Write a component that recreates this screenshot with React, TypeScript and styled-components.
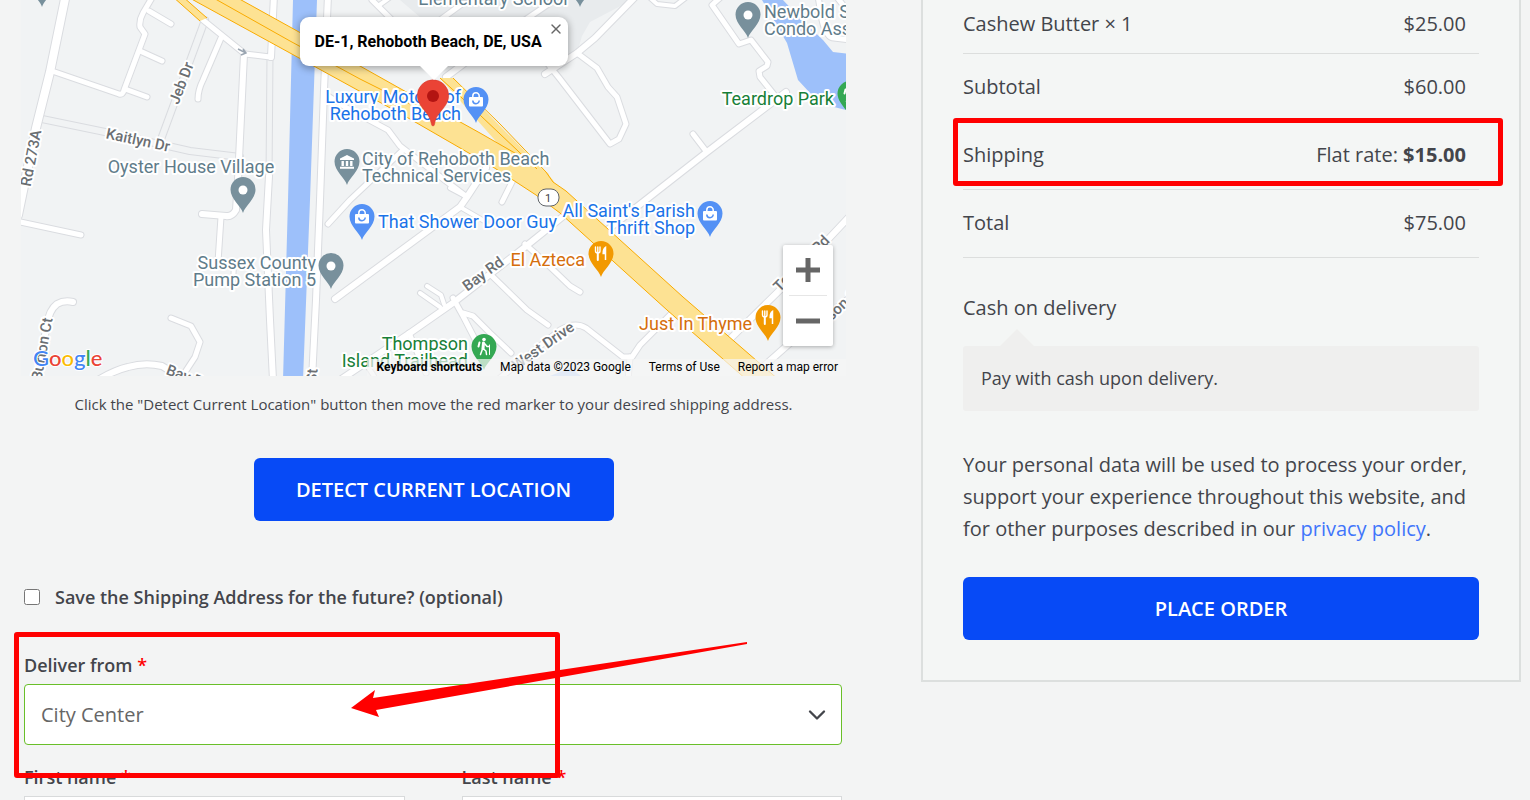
import React from "react";
import styled, { createGlobalStyle } from "styled-components";
import { ChevronDown, Minus, Plus, X } from "lucide-react";

const GlobalStyle = createGlobalStyle`
  *, *::before, *::after { box-sizing: border-box; }
  body {
    margin: 0;
    background: #f3f4f4;
    color: #43454b;
    font-family: "Open Sans", sans-serif;
    font-size: 20px;
    line-height: 32px;
  }
`;

const Page = styled.div`
  display: grid;
  grid-template-columns: minmax(0, 825fr) minmax(0, 600fr);
  column-gap: 75px;
  align-items: start;
  height: 100vh;
  overflow: hidden;
  padding: 0 9px 0 21px;
`;

/* ---------- map ---------- */

const MapFrame = styled.section`
  position: relative;
  height: 376px;
  overflow: hidden;
  background: #f1f3f4;
  font-family: Roboto, sans-serif;
`;

const MapCanvas = styled.svg`
  display: block;
  width: 100%;
  height: 100%;
`;

const Halo = styled.text`
  paint-order: stroke;
  stroke: #fff;
  stroke-width: 4px;
  stroke-linejoin: round;
  font-family: Roboto, sans-serif;
`;

const PlaceLabel = styled(Halo)`
  font-size: 18px;
`;

const RoadLabel = styled(Halo)`
  font-size: 15px;
  font-weight: 500;
  fill: #6b6f73;
`;

const LogoText = styled(Halo)`
  font-family: Lato, sans-serif;
  font-size: 22px;
  font-weight: 500;
  stroke-width: 2px;
`;

const InfoWindow = styled.div`
  position: absolute;
  left: 50%;
  top: 17px;
  transform: translateX(-50%);
  width: 268px;
  padding: 12px 15px;
  border-radius: 9px;
  background: #fff;
  box-shadow: 0 2px 7px 1px rgba(0, 0, 0, 0.3);
  color: #000;
  font-size: 16px;
  font-weight: 700;
  line-height: 25px;
  white-space: nowrap;

  &::after {
    content: "";
    position: absolute;
    left: 120px;
    top: 100%;
    border: 14px solid transparent;
    border-top-color: #fff;
    border-bottom: 0;
  }
`;

const CloseButton = styled.button`
  position: absolute;
  top: 4px;
  right: 4px;
  display: flex;
  padding: 0;
  border: 0;
  background: none;
  color: #666;
`;

const ZoomControl = styled.div`
  position: absolute;
  right: 13px;
  bottom: 30px;
  width: 50px;
  padding: 0 6px;
  border-radius: 2px;
  background: #fff;
  box-shadow: 0 1px 4px rgba(0, 0, 0, 0.3);
`;

const ZoomButton = styled.button`
  display: flex;
  align-items: center;
  justify-content: center;
  width: 100%;
  height: 50px;
  padding: 0;
  border: 0;
  background: none;
  color: #666;

  & + & {
    height: 51px;
    border-top: 1px solid #e6e6e6;
  }
`;

const ZoomGlyph = styled.svg`
  width: 24px;
  height: 24px;
  fill: currentColor;
`;

const MapFooter = styled.div`
  position: absolute;
  right: 0;
  bottom: 0;
  display: flex;
  color: #000;
  font-size: 12px;
  line-height: 17px;

  & > * {
    padding: 0 8px 0 10px;
    border: 0;
    background: rgba(245, 245, 245, 0.7);
    color: inherit;
    font: inherit;
    text-decoration: none;
    white-space: nowrap;
  }
`;

const ShortcutsButton = styled.button`
  && { font-weight: 700; }
`;

const CASING = "#dadce0";
const GROUND = "#f1f3f4";

type Road = [d: string, width: number];

const faintRoads: Road[] = [
  ["M42 119 L105 132 L168 146 L190 151 L240 157", 6],
  ["M205 20 L160 142", 6],
  ["M270 55 L269 178", 5],
];

const roads: Road[] = [
  ["M66 -6 L50 72 L36 128 L18 215", 8],
  ["M52 71 L119 94 Q123 95 124 90 L145 34 L140 27 Q139 20 143 13 L153 -4", 5],
  ["M149 11 L171 24", 5],
  ["M140 51 L162 61", 5],
  ["M125 89 L147 97", 5],
  ["M203 20 L245 54 L270 57", 5],
  ["M221 38 L203 80 Q198 90 198 99", 5],
  ["M244 54 L238 180 L236 210 Q232 217 226 216 L202 214", 6],
  ["M274 -5 L271 57", 6],
  ["M269 176 L266 230 L270 320 L273 380", 6],
  ["M221 217 L218 262", 5],
  ["M234 262 L233 286", 4],
  ["M16 221 L81 235", 5],
  ["M73 302 Q64 300 57 304 Q49 310 47 325 L36 380", 6],
  ["M171 318 L191 326 L200 342 L195 357 L180 380", 5],
  ["M98 380 Q115 370 128 367 Q145 362 162 366 L188 382", 6],
  ["M328 -5 L324 90 L320 200 L316 300 L312 380", 6],
  ["M372 0 L392 20", 5],
  ["M392 -4 L378 6", 4],
  ["M440 20 L466 1", 5],
  ["M525 20 L550 3", 5],
  ["M446 77 L482 50", 6],
  ["M638 -6 L595 38 L577 53 L545 74", 6],
  ["M577 53 L597 68 L608 87 L617 97 L626 124 L619 139 L610 144 L560 79 L540 54", 5],
  ["M648 -4 L657 4 L675 6 L688 -4", 4],
  ["M722 -4 L712 5 L739 44 L751 40 L768 62 L767 66 L759 71 L760 77 L776 97", 5],
  ["M818 -4 L822 20 Q826 38 834 38 L850 40", 5],
  ["M836 -4 L850 14", 5],
  ["M606 231 L707 152 L786 92", 6],
  ["M693 134 L706 151", 5],
  ["M328 96 L345 107 L388 130 L400 146 L430 169 L467 197", 5],
  ["M403 150 L350 200 L328 224", 5],
  ["M486 168 L467 197 L460 207 L335 299", 6],
  ["M450 188 L467 197", 4],
  ["M460 207 L486 222", 4],
  ["M514 178 L502 202", 5],
  ["M340 380 L410 333 L453 303 L525 247 L566 214", 6],
  ["M409 333 L426 373", 5],
  ["M453 298 L463 316 L478 345", 5],
  ["M463 313 L473 316 L490 333 L511 353", 5],
  ["M420 293 L440 307", 4],
  ["M427 286 L441 295 L444 304", 4],
  ["M490 274 L527 310 L548 325", 5],
  ["M525 244 L545 262 L570 286 L580 292", 5],
  ["M500 378 L560 330 Q575 321 586 328 L623 357 L632 357 L640 345 L672 313", 5],
  ["M630 357 L628 380", 5],
  ["M730 339 L787 283 L850 216", 6],
  ["M764 366 L790 343 L850 298", 6],
  ["M374 376 L366 364", 4],
];

const highwayFills = [
  "M172 -4 L200 21 L207 18 L182 -4Z",
  "M440 78 L453 78 L553 180 L560 196 L530 180Z",
  "M186 -4 L290 53 L403 115 L493 167 L536 195 L560 213 L667 310 L747 380 H779 L683 297 L566 191 L553 182 L548 173 L527 160 L480 133 L417 98 L360 66 L290 27 L234 -4Z",
];

const highwayEdges = [
  "M172 -4 L200 21",
  "M182 -4 L207 18",
  "M440 78 L462 98 L537 169",
  "M453 78 L500 124 L546 172 L553 182 L566 191 L683 297 L779 380",
  "M186 -4 L290 53 L403 115 L493 167 L536 195 L560 213 L667 310 L747 380",
  "M234 -4 L290 27 L360 66 L417 98 L480 133 L527 160",
  "M210 -4 L290 41 L360 79 L410 104",
];

type PinKind = "dot" | "civic" | "shop" | "food" | "park";

const pinColors: Record<PinKind, string> = {
  dot: "#78909c",
  civic: "#78909c",
  shop: "#5491f5",
  food: "#f29900",
  park: "#34a853",
};

const pins: { kind: PinKind; x: number; y: number }[] = [
  { kind: "dot", x: 42, y: 7 },
  { kind: "dot", x: 580, y: 7 },
  { kind: "dot", x: 748, y: 38 },
  { kind: "dot", x: 243, y: 213 },
  { kind: "dot", x: 331, y: 289 },
  { kind: "civic", x: 347, y: 185 },
  { kind: "shop", x: 476, y: 123 },
  { kind: "shop", x: 362, y: 240 },
  { kind: "shop", x: 710, y: 237 },
  { kind: "food", x: 601, y: 277 },
  { kind: "food", x: 768, y: 341 },
  { kind: "park", x: 484, y: 370 },
  { kind: "park", x: 850, y: 117 },
];

function PinGlyph({ kind }: { kind: PinKind }) {
  switch (kind) {
    case "dot":
      return <circle cy="-23" r="4.5" fill="#fff" />;
    case "civic":
      return (
        <path
          fill="#fff"
          d="M0 -30 L7 -26.5 V-25 H-7 V-26.5Z M-5.5 -24 h2.4 v5 h-2.4z M-1.2 -24 h2.4 v5 h-2.4z M3.1 -24 h2.4 v5 h-2.4z M-7 -18.2 H7 V-16.2 H-7Z"
        />
      );
    case "shop":
      return (
        <g>
          <rect x="-7" y="-26" width="14" height="9.500" rx="1" fill="#fff" />
          <path d="M-3.2 -25.500 V-27 A3.200 3.200 0 0 1 3.200 -27 V-25.500" fill="none" stroke="#fff" strokeWidth="1.500" />
          <path d="M-3.200 -22.500 A3.200 3.200 0 0 0 3.200 -22.500" fill="none" stroke="#5491f5" strokeWidth="1.500" />
        </g>
      );
    case "food":
      return (
        <g stroke="#fff" fill="none" strokeLinecap="round">
          <path d="M-5.500 -30 V-26 Q-5.500 -24 -3.200 -24 Q-1 -24 -1 -26 V-30 M-3.200 -30 V-25" strokeWidth="1.400" />
          <path d="M-3.200 -24 V-17" strokeWidth="2" />
          <path d="M4.500 -17 V-29.500 Q2.200 -28 2.200 -23.500 H4.500Z" strokeWidth="1.500" fill="#fff" />
        </g>
      );
    case "park":
      return (
        <g stroke="#fff" fill="none" strokeLinecap="round" strokeLinejoin="round">
          <circle cx="0" cy="-30.500" r="1.800" fill="#fff" stroke="none" />
          <path d="M-0.500 -27 L-1 -21.500" strokeWidth="3" />
          <path d="M-1.500 -21 L-3.500 -15.500 M-0.500 -21 L2 -19 L2.500 -15.500 M1 -26 L3 -23.500 L5 -23.500" strokeWidth="1.500" />
          <path d="M-4.500 -27.500 L-5.500 -23.500" strokeWidth="2" />
          <path d="M5.500 -25 V-15.500" strokeWidth="1" />
        </g>
      );
  }
}

type Place = {
  x: number;
  y: number;
  color: string;
  anchor: "start" | "middle" | "end";
  lines: string[];
};

const SLATE = "#5f7c8a";
const BLUE = "#1a73e8";
const ORANGE = "#d56e0c";
const GREEN = "#188038";

const places: Place[] = [
  { x: 493, y: 5, color: SLATE, anchor: "middle", lines: ["Elementary School"] },
  { x: 764, y: 18, color: SLATE, anchor: "start", lines: ["Newbold Square", "Condo Association"] },
  { x: 834, y: 105, color: GREEN, anchor: "end", lines: ["Teardrop Park"] },
  { x: 461, y: 103, color: BLUE, anchor: "end", lines: ["Luxury Motors of", "Rehoboth Beach"] },
  { x: 191, y: 173, color: SLATE, anchor: "middle", lines: ["Oyster House Village"] },
  { x: 362, y: 165, color: SLATE, anchor: "start", lines: ["City of Rehoboth Beach", "Technical Services"] },
  { x: 378, y: 228, color: BLUE, anchor: "start", lines: ["That Shower Door Guy"] },
  { x: 695, y: 217, color: BLUE, anchor: "end", lines: ["All Saint's Parish", "Thrift Shop"] },
  { x: 316, y: 269, color: SLATE, anchor: "end", lines: ["Sussex County", "Pump Station 5"] },
  { x: 585, y: 266, color: ORANGE, anchor: "end", lines: ["El Azteca"] },
  { x: 752, y: 330, color: ORANGE, anchor: "end", lines: ["Just In Thyme"] },
  { x: 468, y: 350, color: GREEN, anchor: "end", lines: ["Thompson", "Island Trailhead"] },
];

const roadLabels: { text: string; x: number; y: number; angle: number }[] = [
  { text: "Jeb Dr", x: 186, y: 85, angle: -69 },
  { text: "Kaitlyn Dr", x: 137, y: 145, angle: 12 },
  { text: "Rd 273A", x: 36, y: 159, angle: -79 },
  { text: "Burton Ct", x: 47, y: 350, angle: -80 },
  { text: "Bay Rd", x: 486, y: 278, angle: -36 },
  { text: "West Drive", x: 546, y: 350, angle: -35 },
  { text: "Bay Rd", x: 187, y: 382, angle: 20 },
  { text: "Terrace Rd", x: 805, y: 267, angle: -45 },
  { text: "Johnson St", x: 835, y: 318, angle: -44 },
  { text: "St", x: 317, y: 376, angle: -86 },
];

function StreetMap() {
  return (
    <MapCanvas viewBox="21 0 825 376" preserveAspectRatio="xMidYMid slice" role="img" aria-label="Map of Rehoboth Beach">
      <rect x="-400" y="-200" width="1800" height="800" fill={GROUND} />
      <path d="M400 0 H632 L590 22 L582 36 L577 53 L560 60 H470Z" fill="#e8ebed" />
      <path d="M293 0 H317 L310 200 L303 380 H283 L288 200Z" fill="#9dc0fa" />
      <path d="M762 0 H783 L800 18 L823 40 L833 52 L850 54 V111 L830 106 L810 93 L798 80 L787 43Z" fill="#9dc0fa" />
      <path d="M545 378 L570 368 L584 378Z" fill="#b4cff9" />

      <g fill="none" strokeLinecap="round" strokeLinejoin="round">
        {faintRoads.map(([d, w]) => (
          <path key={d} d={d} stroke={CASING} strokeWidth={w + 2} />
        ))}
        {faintRoads.map(([d, w]) => (
          <path key={d} d={d} stroke={GROUND} strokeWidth={w} />
        ))}
        {roads.map(([d, w]) => (
          <path key={d} d={d} stroke={CASING} strokeWidth={w + 2} />
        ))}
        {roads.map(([d, w]) => (
          <path key={d} d={d} stroke="#fff" strokeWidth={w} />
        ))}
      </g>

      {highwayFills.map((d) => (
        <path key={d} d={d} fill="#fde293" />
      ))}
      {highwayEdges.map((d) => (
        <path key={d} d={d} fill="none" stroke="#f9ab00" />
      ))}
      <path d="M238 49 L246 53 M243 49 L246 53 L241 55" fill="none" stroke="#9aa5b1" strokeWidth="1.500" />

      <g>
        {roadLabels.map((label) => (
          <RoadLabel
            key={label.text + label.x}
            textAnchor="middle"
            transform={`translate(${label.x} ${label.y}) rotate(${label.angle})`}
          >
            {label.text}
          </RoadLabel>
        ))}
        {places.map((place) => (
          <PlaceLabel key={place.lines[0]} fill={place.color} textAnchor={place.anchor}>
            {place.lines.map((line, i) => (
              <tspan key={line} x={place.x} y={place.y + i * 17}>
                {line}
              </tspan>
            ))}
          </PlaceLabel>
        ))}
      </g>

      <rect x="538" y="189" width="21" height="17" rx="8" fill="#fff" stroke="#5f6368" />
      <text x="548" y="202" textAnchor="middle" fontSize="11" fill="#3c4043" fontFamily="Roboto, sans-serif">
        1
      </text>

      {pins.map((pin) => (
        <g key={`${pin.x}-${pin.y}`} transform={`translate(${pin.x} ${pin.y})`}>
          <path
            d="M0 0 C-2 -7 -12.500 -14 -12.500 -23.500 A12.500 12.500 0 0 1 12.500 -23.500 C12.500 -14 2 -7 0 0Z"
            fill={pinColors[pin.kind]}
          />
          <PinGlyph kind={pin.kind} />
        </g>
      ))}

      <g transform="translate(433 126)">
        <path
          d="M0 0 C-1 0 -1.500 -1 -1.800 -3 C-3.500 -14 -15.700 -19 -15.700 -30.500 A15.700 15.700 0 0 1 15.700 -30.500 C15.700 -19 3.500 -14 1.800 -3 C1.500 -1 1 0 0 0Z"
          fill="#ea4335"
          stroke="#d33b2e"
          strokeWidth="0.500"
        />
        <circle cy="-30" r="6" fill="#b31412" />
      </g>

      <LogoText x="33" y="366">
        <tspan fill="#4285f4">G</tspan>
        <tspan fill="#ea4335">o</tspan>
        <tspan fill="#fbbc04">o</tspan>
        <tspan fill="#4285f4">g</tspan>
        <tspan fill="#34a853">l</tspan>
        <tspan fill="#ea4335">e</tspan>
      </LogoText>
    </MapCanvas>
  );
}

/* ---------- form ---------- */

const Hint = styled.p`
  margin: 16px 0 42px;
  font-size: 15px;
  line-height: 24px;
  text-align: center;
`;

const PrimaryButton = styled.button<{ $wide?: boolean }>`
  display: block;
  width: ${(p) => (p.$wide ? "100%" : "360px")};
  height: 63px;
  margin: 0 auto;
  padding: 0;
  border: 0;
  border-radius: 6px;
  background: #074af6;
  color: #fff;
  font-family: inherit;
  font-size: 20px;
  font-weight: 600;
  text-transform: uppercase;
`;

const Form = styled.form`
  padding: 62px 4px 0 3px;
  font-size: 18px;
  line-height: 28px;
`;

const CheckRow = styled.label`
  display: flex;
  align-items: center;
  gap: 15px;
  margin-bottom: 40px;
  font-weight: 600;

  input {
    width: 16px;
    height: 16px;
    margin: 0;
  }
`;

const Field = styled.div`
  position: relative;
  display: flex;
  flex-direction: column;
  gap: 5px;
`;

const FieldLabel = styled.label`
  font-weight: 600;
`;

const Required = styled.span`
  color: #f00;
`;

const SelectBox = styled.div`
  position: relative;

  svg {
    position: absolute;
    right: 11px;
    top: 17px;
    pointer-events: none;
  }
`;

const Select = styled.select`
  appearance: none;
  display: block;
  width: 100%;
  height: 61px;
  padding: 0 16px;
  border: 1px solid #69bf29;
  border-radius: 4px;
  background: #fff;
  color: #666;
  font-family: inherit;
  font-size: 20px;
`;

const NameRow = styled.div`
  display: grid;
  grid-template-columns: 1fr 1fr;
  column-gap: 57px;
  margin-top: 18px;
`;

const TextInput = styled.input`
  width: 100%;
  height: 61px;
  padding: 0 16px;
  border: 1px solid #d8dadb;
  border-radius: 0;
  background: #fff;
  font: inherit;
`;

const HighlightBox = styled.div`
  position: absolute;
  border: 5px solid #f00;
  border-radius: 3px;
  pointer-events: none;
`;

const FieldHighlight = styled(HighlightBox)`
  z-index: 1;
  top: -19px;
  left: -10px;
  width: 546px;
  height: 146px;
`;

const PointerArrow = styled.svg`
  position: absolute;
  z-index: 1;
  top: -10px;
  left: 326px;
  width: 400px;
  height: 80px;
  pointer-events: none;
`;

/* ---------- order summary ---------- */

const OrderCard = styled.aside`
  padding: 0 40px 40px;
  border: 2px solid #dcdfde;
  border-top: 0;
  background: #f4f6f5;
`;

const OrderTable = styled.table`
  width: 100%;
  border-collapse: separate;
  border-spacing: 0;
`;

const OrderRow = styled.tr<{ $first?: boolean }>`
  position: relative;

  th, td {
    padding: ${(p) => (p.$first ? "8px 0 13px" : "17px 0 18px")};
    border-bottom: 1px solid #dcdedd;
    font-weight: 400;
    text-align: left;
  }

  td {
    padding-right: 13px;
    text-align: right;
  }
`;

const RowHighlight = styled(HighlightBox)`
  top: -4px;
  right: -24px;
  bottom: 4px;
  left: -10px;
`;

const PaymentTitle = styled.div`
  margin-top: 34px;
`;

const PaymentBox = styled.p`
  position: relative;
  margin: 22px 0 38px;
  padding: 16px 18px 17px;
  border-radius: 3px;
  background: #efefee;
  font-size: 18px;

  &::before {
    content: "";
    position: absolute;
    left: 37px;
    bottom: 100%;
    border: 17px solid transparent;
    border-top: 0;
    border-bottom-color: #efefee;
  }
`;

const PrivacyNote = styled.p`
  margin: 0 0 32px;
`;

const PrivacyLink = styled.a`
  color: #4075fb;
  text-decoration: none;
`;

export default function App() {
  return (
    <>
      <GlobalStyle />
      <Page>
        <main>
          <MapFrame>
            <StreetMap />
            <InfoWindow>
              DE-1, Rehoboth Beach, DE, USA
              <CloseButton type="button" aria-label="Close">
                <X size={16} strokeWidth={2} />
              </CloseButton>
            </InfoWindow>
            <ZoomControl>
              <ZoomButton type="button" aria-label="Zoom in">
                <ZoomGlyph viewBox="0 0 24 24">
                  <path d="M0 9.500 H9.500 V0 H14.500 V9.500 H24 V14.500 H14.500 V24 H9.500 V14.500 H0Z" />
                </ZoomGlyph>
              </ZoomButton>
              <ZoomButton type="button" aria-label="Zoom out">
                <ZoomGlyph viewBox="0 0 24 24">
                  <path d="M0 9.500 H24 V14.500 H0Z" />
                </ZoomGlyph>
              </ZoomButton>
            </ZoomControl>
            <MapFooter>
              <ShortcutsButton type="button">Keyboard shortcuts</ShortcutsButton>
              <span>Map data ©2023 Google</span>
              <a href="#terms">Terms of Use</a>
              <a href="#report">Report a map error</a>
            </MapFooter>
          </MapFrame>

          <Hint>
            Click the "Detect Current Location" button then move the red marker to your desired shipping address.
          </Hint>
          <PrimaryButton type="button">Detect current location</PrimaryButton>

          <Form>
            <CheckRow>
              <input type="checkbox" />
              Save the Shipping Address for the future? (optional)
            </CheckRow>

            <Field>
              <FieldLabel htmlFor="deliver-from">
                Deliver from <Required>*</Required>
              </FieldLabel>
              <SelectBox>
                <Select id="deliver-from" defaultValue="City Center">
                  <option>City Center</option>
                </Select>
                <ChevronDown size={28} strokeWidth={2} />
              </SelectBox>
              <FieldHighlight />
              <PointerArrow viewBox="0 0 400 80" aria-hidden="true">
                <path d="M1 67 L25 49 L23 57 L397 1 V3 L26 69 L29 76Z" fill="#f00" />
              </PointerArrow>
            </Field>

            <NameRow>
              <Field>
                <FieldLabel htmlFor="first-name">
                  First name <Required>*</Required>
                </FieldLabel>
                <TextInput id="first-name" type="text" />
              </Field>
              <Field>
                <FieldLabel htmlFor="last-name">
                  Last name <Required>*</Required>
                </FieldLabel>
                <TextInput id="last-name" type="text" />
              </Field>
            </NameRow>
          </Form>
        </main>

        <OrderCard>
          <OrderTable>
            <tbody>
              <OrderRow $first>
                <th scope="row">Cashew Butter × 1</th>
                <td>$25.00</td>
              </OrderRow>
              <OrderRow>
                <th scope="row">Subtotal</th>
                <td>$60.00</td>
              </OrderRow>
              <OrderRow>
                <th scope="row">Shipping</th>
                <td>
                  Flat rate: <strong>$15.00</strong>
                  <RowHighlight />
                </td>
              </OrderRow>
              <OrderRow>
                <th scope="row">Total</th>
                <td>$75.00</td>
              </OrderRow>
            </tbody>
          </OrderTable>

          <PaymentTitle>Cash on delivery</PaymentTitle>
          <PaymentBox>Pay with cash upon delivery.</PaymentBox>
          <PrivacyNote>
            Your personal data will be used to process your order, support your experience throughout this website, and
            for other purposes described in our <PrivacyLink href="#privacy">privacy policy</PrivacyLink>.
          </PrivacyNote>
          <PrimaryButton type="submit" $wide>
            Place order
          </PrimaryButton>
        </OrderCard>
      </Page>
    </>
  );
}
